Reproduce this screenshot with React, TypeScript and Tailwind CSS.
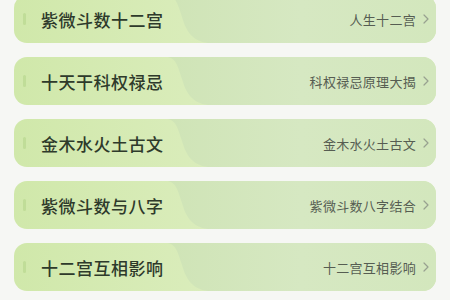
import { ChevronRight } from 'lucide-react'

const items = [
  { title: '紫微斗数十二宫', sub: '人生十二宫' },
  { title: '十天干科权禄忌', sub: '科权禄忌原理大揭' },
  { title: '金木水火土古文', sub: '金木水火土古文' },
  { title: '紫微斗数与八字', sub: '紫微斗数八字结合' },
  { title: '十二宫互相影响', sub: '十二宫互相影响' },
]

function TopicCard({ title, sub }: { title: string; sub: string }) {
  return (
    <div className="relative h-[48px] overflow-hidden rounded-[13px] bg-gradient-to-r from-[#d0e8aa] via-[#dbedbd] to-[#d6eab8]">
      {/* muted wave on the right half */}
      <svg
        className="absolute inset-0 h-full w-full"
        viewBox="0 0 422 48"
        preserveAspectRatio="none"
      >
        <defs>
          <linearGradient id="wave" x1="0" y1="0" x2="1" y2="0">
            <stop offset="0" stopColor="#cfe4b6" />
            <stop offset="0.5" stopColor="#d6e8c2" />
            <stop offset="1" stopColor="#d3e7bd" />
          </linearGradient>
        </defs>
        <path
          d="M152 0 C 162 0, 164 10, 168 22 C 172 36, 178 46, 194 48 L 422 48 L 422 0 Z"
          fill="url(#wave)"
        />
      </svg>
      <div className="relative flex h-full items-center pl-[9px] pr-[2px]">
        <span className="h-[12px] w-[3px] rounded-full bg-[#c0dd98]" />
        <span className="ml-[15px] text-[17px] font-medium leading-none tracking-[0.5px] text-[#2e3a2b]">
          {title}
        </span>
        <span className="ml-auto text-[13px] leading-none tracking-[0.3px] text-[#565d52]">{sub}</span>
        <ChevronRight size={16} strokeWidth={1.8} className="ml-[2px] text-[#98a190]" />
      </div>
    </div>
  )
}

export default function App() {
  return (
    <div
      className="h-[300px] w-[450px] overflow-hidden bg-[#f6f7f4] px-[14px]"
      style={{ fontFamily: '"Noto Sans CJK SC", "Noto Sans", sans-serif' }}
    >
      <div className="-mt-[5px] flex flex-col gap-[14px]">
        {items.map((it) => (
          <TopicCard key={it.title} title={it.title} sub={it.sub} />
        ))}
      </div>
    </div>
  )
}
